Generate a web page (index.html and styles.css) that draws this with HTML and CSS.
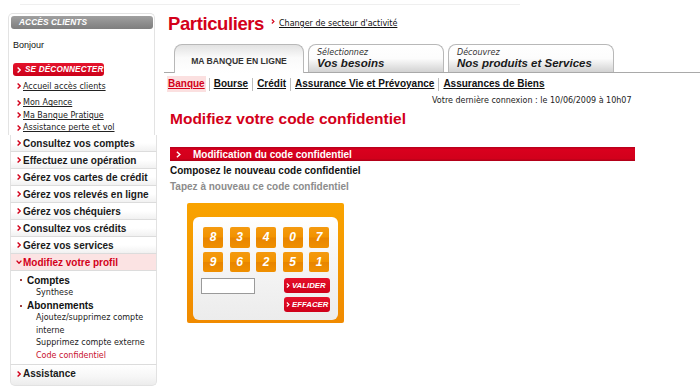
FILE: index.html
```html
<!DOCTYPE html>
<html lang="fr">
<head>
<meta charset="utf-8">
<title>Particuliers - Modifiez votre code confidentiel</title>
<link rel="stylesheet" href="styles.css">
</head>
<body>
<div class="topline"></div>
<div class="page">
  <aside class="sidebar">
    <div class="client-box">
      <div class="client-head">ACCÈS CLIENTS</div>
      <div class="hello">Bonjour</div>
      <a class="logout" href="#"><svg class="chev chev-white" viewBox="0 0 4 6"><path d="M0.6 0.6 L3.2 3 L0.6 5.4"/></svg>SE DÉCONNECTER</a>
      <ul class="quick">
        <li><svg class="chev" viewBox="0 0 4 6"><path d="M0.6 0.6 L3.2 3 L0.6 5.4"/></svg><a href="#">Accueil accès clients</a></li>
      </ul>
      <ul class="quick">
        <li><svg class="chev" viewBox="0 0 4 6"><path d="M0.6 0.6 L3.2 3 L0.6 5.4"/></svg><a href="#">Mon Agence</a></li>
        <li><svg class="chev" viewBox="0 0 4 6"><path d="M0.6 0.6 L3.2 3 L0.6 5.4"/></svg><a href="#">Ma Banque Pratique</a></li>
        <li><svg class="chev" viewBox="0 0 4 6"><path d="M0.6 0.6 L3.2 3 L0.6 5.4"/></svg><a href="#">Assistance perte et vol</a></li>
      </ul>
    </div>
    <ul class="menu">
      <li class="menu-item"><svg class="chev" viewBox="0 0 4 6"><path d="M0.6 0.6 L3.2 3 L0.6 5.4"/></svg>Consultez vos comptes</li>
      <li class="menu-item"><svg class="chev" viewBox="0 0 4 6"><path d="M0.6 0.6 L3.2 3 L0.6 5.4"/></svg>Effectuez une opération</li>
      <li class="menu-item"><svg class="chev" viewBox="0 0 4 6"><path d="M0.6 0.6 L3.2 3 L0.6 5.4"/></svg>Gérez vos cartes de crédit</li>
      <li class="menu-item"><svg class="chev" viewBox="0 0 4 6"><path d="M0.6 0.6 L3.2 3 L0.6 5.4"/></svg>Gérez vos relevés en ligne</li>
      <li class="menu-item"><svg class="chev" viewBox="0 0 4 6"><path d="M0.6 0.6 L3.2 3 L0.6 5.4"/></svg>Gérez vos chéquiers</li>
      <li class="menu-item"><svg class="chev" viewBox="0 0 4 6"><path d="M0.6 0.6 L3.2 3 L0.6 5.4"/></svg>Consultez vos crédits</li>
      <li class="menu-item"><svg class="chev" viewBox="0 0 4 6"><path d="M0.6 0.6 L3.2 3 L0.6 5.4"/></svg>Gérez vos services</li>
      <li class="menu-item is-open"><svg class="chev-down" viewBox="0 0 6 4"><path d="M0.6 0.6 L3 3.2 L5.4 0.6"/></svg>Modifiez votre profil</li>
      <li class="submenu">
        <div class="sub-group"><span class="bullet"></span>Comptes</div>
        <div class="sub-link">Synthese</div>
        <div class="sub-group"><span class="bullet"></span>Abonnements</div>
        <div class="sub-link">Ajoutez/supprimez compte</div>
        <div class="sub-link">interne</div>
        <div class="sub-link">Supprimez compte externe</div>
        <div class="sub-link current">Code confidentiel</div>
      </li>
      <li class="menu-item last"><svg class="chev" viewBox="0 0 4 6"><path d="M0.6 0.6 L3.2 3 L0.6 5.4"/></svg>Assistance</li>
    </ul>
  </aside>

  <main class="main">
    <div class="title-row">
      <h1 class="title">Particuliers</h1>
      <svg class="sector-chev" viewBox="0 0 4 6"><path d="M0.6 0.6 L3.2 3 L0.6 5.4"/></svg>
      <a class="sector-link" href="#">Changer de secteur d'activité</a>
    </div>

    <nav class="tabs">
      <div class="tab tab-active"><span class="tab-label">MA BANQUE EN LIGNE</span></div>
      <div class="tab tab-needs"><span class="tab-small">Sélectionnez</span><span class="tab-big">Vos besoins</span></div>
      <div class="tab tab-products"><span class="tab-small">Découvrez</span><span class="tab-big">Nos produits et Services</span></div>
    </nav>

    <nav class="subnav">
      <a class="subnav-link current" href="#">Banque</a><span class="sep"></span>
      <a class="subnav-link" href="#">Bourse</a><span class="sep"></span>
      <a class="subnav-link" href="#">Crédit</a><span class="sep"></span>
      <a class="subnav-link" href="#">Assurance Vie et Prévoyance</a><span class="sep"></span>
      <a class="subnav-link" href="#">Assurances de Biens</a>
    </nav>

    <p class="last-login">Votre dernière connexion : le 10/06/2009 à 10h07</p>

    <h2 class="page-title">Modifiez votre code confidentiel</h2>

    <div class="section-bar"><svg class="bar-chev" viewBox="0 0 4 6"><path d="M0.6 0.6 L3.2 3 L0.6 5.4"/></svg>Modification du code confidentiel</div>
    <p class="step">Composez le nouveau code confidentiel</p>
    <p class="step muted">Tapez à nouveau ce code confidentiel</p>

    <div class="keypad">
      <div class="keypad-inner">
        <div class="keys">
          <span class="key">8</span><span class="key">3</span><span class="key">4</span><span class="key">0</span><span class="key">7</span>
          <span class="key">9</span><span class="key">6</span><span class="key">2</span><span class="key">5</span><span class="key">1</span>
        </div>
        <div class="keypad-bottom">
          <div class="code-field"></div>
          <div class="actions">
            <span class="pad-btn"><svg class="btn-chev" viewBox="0 0 4 6"><path d="M0.6 0.6 L3.2 3 L0.6 5.4"/></svg>VALIDER</span>
            <span class="pad-btn"><svg class="btn-chev" viewBox="0 0 4 6"><path d="M0.6 0.6 L3.2 3 L0.6 5.4"/></svg>EFFACER</span>
          </div>
        </div>
      </div>
    </div>
  </main>
</div>
</body>
</html>
```

FILE: styles.css
```css
* { box-sizing: border-box; }

body {
  margin: 0;
  background: #fff;
  color: #111;
  font-family: "Liberation Sans", Arial, sans-serif;
}

a { color: inherit; }

ul { list-style: none; margin: 0; padding: 0; }

p { margin: 0; }

.topline {
  height: 1px;
  width: 500px;
  margin: 4px 0 0 20px;
  background: #efefef;
}

.page {
  display: flex;
  padding: 8px 0 0 8px;
}

/* ---------- Sidebar ---------- */
.sidebar {
  width: 149px;
  flex: none;
}

.chev {
  width: 4px;
  height: 6px;
  flex: none;
  fill: none;
  stroke: #d3001a;
  stroke-width: 1.4;
}

.chev-white { stroke: #fff; }

.chev-down {
  width: 6px;
  height: 4px;
  flex: none;
  fill: none;
  stroke: #d3001a;
  stroke-width: 1.4;
}

.client-box {
  width: 147px;
  border: 1px solid #e3e3e3;
  border-bottom: none;
  border-radius: 5px 5px 0 0;
  padding-bottom: 1px;
}

.client-head {
  height: 13px;
  margin: 2px 1px 0 2px;
  padding-left: 8px;
  border-radius: 3px;
  background: linear-gradient(#a0a0a0, #7e7e7e);
  color: #fff;
  font-size: 8.3px;
  font-weight: bold;
  font-style: italic;
  line-height: 13px;
  letter-spacing: 0.1px;
}

.hello {
  margin-top: 11px;
  padding-left: 4px;
  font-size: 9px;
  line-height: 11px;
  color: #111;
}

.logout {
  display: flex;
  align-items: center;
  gap: 4px;
  width: 91px;
  height: 13px;
  margin: 12px 0 0 4px;
  padding-left: 4px;
  border-radius: 3px;
  background: linear-gradient(#e5142c, #cc0019);
  color: #fff;
  font-size: 8.2px;
  font-weight: bold;
  font-style: italic;
  letter-spacing: 0.15px;
  text-decoration: none;
  white-space: nowrap;
}

.quick { margin-top: 4px; }

.quick li {
  display: flex;
  align-items: center;
  gap: 2px;
  padding-left: 8px;
  height: 12.5px;
  font-family: "DejaVu Sans", Verdana, sans-serif;
  font-size: 8px;
  color: #222;
}

.menu {
  margin-left: 2px;
  width: 147px;
}

.menu-item {
  display: flex;
  align-items: center;
  gap: 2px;
  height: 17px;
  padding-left: 6px;
  border: 1px solid #e2e2e2;
  border-top: none;
  border-bottom-color: #dcdcdc;
  background: linear-gradient(#fff, #fff 50%, #f1f1f1);
  font-size: 10px;
  font-weight: bold;
  color: #1a1a1a;
}

.menu-item.is-open {
  background: #fbe3e3;
  color: #d3001a;
  gap: 1px;
  padding-left: 5px;
}

.menu-item.last {
  height: 21px;
  align-items: flex-start;
  padding-top: 3px;
  border-bottom-color: #e2e2e2;
  border-radius: 0 0 5px 5px;
  background: linear-gradient(#fff, #f6f6f6 60%, #ececec);
}

.menu-item.last .chev { margin-top: 3px; }

.submenu {
  padding: 2.5px 0 2px;
  border: 1px solid #e2e2e2;
  border-top: none;
  border-bottom-color: #dcdcdc;
  background: #fff;
}

.sub-group {
  display: flex;
  align-items: center;
  height: 13px;
  padding-left: 9px;
  font-size: 10px;
  font-weight: bold;
  color: #111;
}

.bullet {
  width: 2px;
  height: 2px;
  margin-right: 5px;
  background: #a04040;
}

.sub-link {
  height: 12.5px;
  padding-left: 25px;
  font-family: "DejaVu Sans", Verdana, sans-serif;
  font-size: 8px;
  line-height: 12.5px;
  color: #222;
}

.sub-link.current { color: #c8102e; }

/* ---------- Main ---------- */
.main {
  flex: 1;
  margin-left: 7px;
}

.title-row {
  display: flex;
  align-items: flex-start;
  height: 22px;
  padding-left: 4px;
}

.title {
  margin: 0;
  font-size: 18.5px;
  line-height: 22px;
  font-weight: bold;
  letter-spacing: -0.4px;
  color: #d3001a;
}

.sector-chev {
  width: 4px;
  height: 5px;
  margin: 6px 0 0 7px;
  fill: none;
  stroke: #d3001a;
  stroke-width: 1.3;
}

.sector-link {
  margin: 6px 0 0 4px;
  font-family: "DejaVu Sans", Verdana, sans-serif;
  font-size: 8px;
  line-height: 10px;
  color: #111;
}

.tabs {
  display: flex;
  align-items: flex-end;
  gap: 4px;
  height: 29px;
  margin-top: 9px;
  padding-left: 10px;
  border-bottom: 1px solid #a9a9a9;
}

.tab {
  display: flex;
  flex-direction: column;
  height: 28px;
  padding: 3px 8px 0;
  border: 1px solid #b8b8b8;
  border-bottom: none;
  border-radius: 8px 8px 0 0;
  background: linear-gradient(#fff, #fcfcfc 50%, #d2d2d2);
}

.tab-active {
  width: 130px;
  height: 29px;
  margin-bottom: -1px;
  align-items: center;
  padding-top: 10px;
  background: linear-gradient(#e2e2e2, #fafafa 45%, #fff);
}

.tab-needs { width: 136px; }
.tab-products { width: 166px; }

.tab-label {
  font-size: 8.6px;
  line-height: 12px;
  font-weight: bold;
  color: #333;
}

.tab-small {
  font-family: "DejaVu Sans", Verdana, sans-serif;
  font-size: 8px;
  font-style: italic;
  line-height: 9px;
  color: #333;
}

.tab-big {
  font-size: 11.5px;
  font-weight: bold;
  font-style: italic;
  line-height: 13px;
  color: #1a1a1a;
}

.subnav {
  display: flex;
  align-items: center;
  height: 14px;
  margin-top: 4px;
  padding-left: 4px;
}

.subnav-link {
  font-size: 10px;
  font-weight: bold;
  line-height: 14px;
  color: #111;
}

.subnav-link.current {
  color: #d3001a;
  background: #fbe0e0;
  box-shadow: 0 0 0 1px #fbe0e0;
}

.sep {
  width: 1px;
  height: 13px;
  margin: 0 4px;
  background: #bdbdbd;
}

.last-login {
  margin-top: 5px;
  padding-left: 268px;
  font-family: "DejaVu Sans", Verdana, sans-serif;
  font-size: 8px;
  line-height: 10px;
  color: #222;
}

.page-title {
  margin: 4px 0 0;
  padding-left: 6px;
  font-size: 15.5px;
  line-height: 18px;
  font-weight: bold;
  color: #d3001a;
}

.section-bar {
  display: flex;
  align-items: center;
  width: 465px;
  height: 14px;
  margin: 19px 0 0 6px;
  padding-left: 6px;
  background: linear-gradient(#b5001b 0, #d9001e 18%, #d2001b 82%, #ac0018 100%);
  color: #fff;
  font-size: 10px;
  font-weight: bold;
}

.bar-chev {
  width: 5px;
  height: 7px;
  margin-right: 12px;
  fill: none;
  stroke: #fff;
  stroke-width: 1.2;
}

.step {
  margin: 2.5px 0 0 6px;
  font-size: 10px;
  font-weight: bold;
  line-height: 13px;
  color: #111;
}

.step.muted {
  margin-top: 3px;
  color: #8c8c8c;
}

.keypad {
  width: 157px;
  height: 120px;
  margin: 10.5px 0 0 23px;
  padding: 14px 6px 3px;
  border-radius: 2px;
  background: linear-gradient(#f9a300, #f59a00 40%, #f08a00);
}

.keypad-inner {
  height: 103px;
  padding: 10px 8px 0;
  border-radius: 6px;
  background: linear-gradient(#fff, #f6f6f6 40%, #ececec);
}

.keys {
  display: grid;
  grid-template-columns: repeat(5, 20px);
  column-gap: 6.5px;
  row-gap: 4px;
  margin-left: 2px;
}

.key {
  display: flex;
  align-items: center;
  justify-content: center;
  height: 20.5px;
  border-radius: 2px;
  background: linear-gradient(#f49a10, #f29300 48%, #e88500 52%, #f09000);
  color: #fff;
  font-size: 12px;
  font-weight: bold;
  font-style: italic;
}

.keypad-bottom {
  display: flex;
  justify-content: space-between;
  margin-top: 6px;
}

.code-field {
  width: 54px;
  height: 16px;
  border: 1px solid #9a9a9a;
  background: #fff;
}

.actions {
  display: flex;
  flex-direction: column;
  gap: 4px;
}

.pad-btn {
  display: flex;
  align-items: center;
  gap: 2px;
  width: 46px;
  height: 15px;
  padding-left: 2px;
  border-radius: 3px;
  background: linear-gradient(#e5102a, #cf001a);
  color: #fff;
  font-size: 7.8px;
  font-weight: bold;
  font-style: italic;
  white-space: nowrap;
  overflow: hidden;
}

.btn-chev {
  width: 4px;
  height: 5px;
  flex: none;
  fill: none;
  stroke: #fff;
  stroke-width: 1.3;
}
```
